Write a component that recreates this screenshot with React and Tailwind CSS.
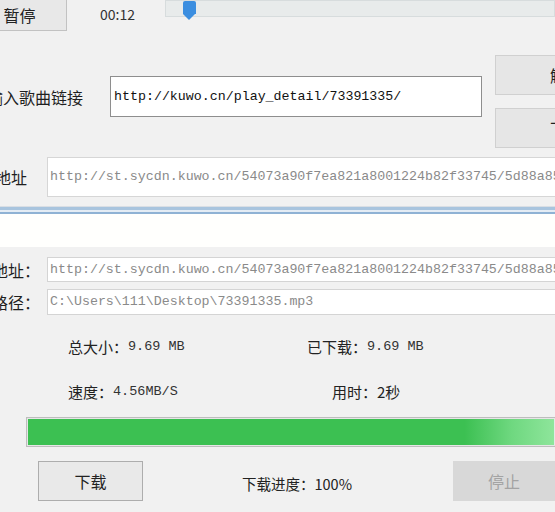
import React from "react";

const cjk = { fontFamily: '"Noto Sans CJK SC", "Noto Sans", sans-serif' };
const mono = { fontFamily: '"Liberation Mono", "DejaVu Sans Mono", monospace' };

function Label({ width, children }) {
  return (
    <div
      className="flex shrink-0 justify-end overflow-hidden whitespace-nowrap text-[16px] text-[#1f1f1f]"
      style={{ width }}
    >
      {children}
    </div>
  );
}

function Stat({ label, value, className }) {
  return (
    <div className={`flex items-center whitespace-nowrap ${className}`}>
      <span className="text-[15px] text-[#222]">{label}</span>
      <span className="text-[13.5px] text-[#333]" style={mono}>
        {value}
      </span>
    </div>
  );
}

export default function App() {
  return (
    <div
      className="relative h-[512px] w-[555px] overflow-hidden bg-[#f1f1f1]"
      style={cjk}
    >
      {/* player bar */}
      <div className="flex h-[31px] items-start">
        <button className="-ml-[28px] -mt-[1px] flex h-[32px] w-[95px] shrink-0 items-center justify-center border border-[#c2c2c2] bg-[#e8e8e8] text-[16px] text-[#222]">
          暂停
        </button>
        <div className="ml-[33px] mt-[4px] text-[14px] text-[#333]">00:12</div>
        <div className="relative ml-[30px] h-[17px] flex-1 border border-[#d7dcdd] bg-[#e8ebeb]">
          <div className="absolute left-[17px] top-0 flex flex-col items-center">
            <div className="h-[13px] w-[13px] rounded-t-[2px] bg-[#3b8ee0]" />
            <div className="h-0 w-0 border-x-[6.5px] border-t-[6px] border-x-transparent border-t-[#3b8ee0]" />
          </div>
        </div>
      </div>

      {/* link section */}
      <div className="flex h-[126px]">
        <div className="flex flex-1 items-start pt-[45px]">
          <Label width={83}>
            <span className="mt-[9px]">输入歌曲链接</span>
          </Label>
          <div
            className="ml-[27px] flex h-[41px] w-[372px] items-center border border-[#8e8e8e] bg-white pl-[3px] text-[13.3px] text-[#111]"
            style={mono}
          >
            http://kuwo.cn/play_detail/73391335/
          </div>
        </div>
        <div className="flex shrink-0 flex-col gap-[13px] pt-[24px]" style={{ width: 60 }}>
          <button className="flex h-[40px] w-[142px] items-center justify-center border border-[#d0d0d0] bg-[#e6e6e6] text-[16px] text-[#222]">
            解析
          </button>
          <button className="flex h-[40px] w-[142px] items-center justify-center border border-[#d0d0d0] bg-[#e6e6e6] text-[16px] text-[#222]">
            下载
          </button>
        </div>
      </div>

      <div className="flex h-[40px] items-center">
        <Label width={27}>下载地址</Label>
        <div
          className="ml-[20px] flex h-[40px] flex-1 items-center whitespace-nowrap border border-r-0 border-[#d6d6d6] bg-white pl-[2px] text-[13.3px] text-[#8a8a8a]"
          style={mono}
        >
          http://st.sycdn.kuwo.cn/54073a90f7ea821a8001224b82f33745/5d88a85b
        </div>
      </div>

      {/* window separator */}
      <div className="mt-[9px] h-px bg-[#d9dee4]" />
      <div className="h-[3px] bg-[#a8c4de]" />
      <div className="h-[2px] bg-[#e4ecf4]" />
      <div className="h-[2px] bg-[#8fb2d4]" />
      <div className="h-[33px] bg-[#fffffd]" />

      {/* download section */}
      <div className="flex flex-col">
        <div className="mt-[10px] flex h-[25px] items-center">
          <Label width={40}>下载地址：</Label>
          <div
            className="ml-[7px] flex h-[25px] flex-1 items-center whitespace-nowrap border border-r-0 border-[#d4d4d4] bg-white pl-[2px] text-[13.3px] text-[#8a8a8a]"
            style={mono}
          >
            http://st.sycdn.kuwo.cn/54073a90f7ea821a8001224b82f33745/5d88a85b
          </div>
        </div>
        <div className="mt-[7px] flex h-[26px] items-center">
          <Label width={40}>保存路径：</Label>
          <div
            className="ml-[7px] flex h-[26px] flex-1 items-center whitespace-nowrap border border-r-0 border-[#d4d4d4] bg-white pl-[2px] text-[13.3px] text-[#8a8a8a]"
            style={mono}
          >
            C:\Users\111\Desktop\73391335.mp3
          </div>
        </div>

        <div className="mt-[22px] flex h-[20px]">
          <Stat label="总大小：" value="9.69 MB" className="ml-[68px] w-[239px]" />
          <Stat label="已下载：" value="9.69 MB" />
        </div>
        <div className="mt-[25px] flex h-[20px]">
          <Stat label="速度：" value="4.56MB/S" className="ml-[68px] w-[264px]" />
          <div className="flex items-center whitespace-nowrap text-[15px] text-[#222]">
            用时：2秒
          </div>
        </div>

        <div className="ml-[26px] mt-[15px] h-[30px] border border-r-0 border-[#bdbdbd] bg-[#e6e6e6] p-px">
          <div className="h-full w-full bg-[linear-gradient(90deg,#3cc052_0%,#3cc052_83%,#6fd880_92%,#8ee59b_100%)]" />
        </div>

        <div className="mt-[14px] flex h-[40px] items-center">
          <button className="ml-[38px] flex h-[40px] w-[105px] items-center justify-center border border-[#adadad] bg-[#e9e9e9] text-[16px] text-[#222]">
            下载
          </button>
          <div className="ml-[99px] mt-[6px] whitespace-nowrap text-[14.5px] text-[#222]">
            下载进度：100%
          </div>
          <button className="ml-auto flex h-[40px] w-[102px] items-center justify-center bg-[#d8d8d8] text-[16px] text-[#a3a3a3]">
            停止
          </button>
        </div>
      </div>
    </div>
  );
}
